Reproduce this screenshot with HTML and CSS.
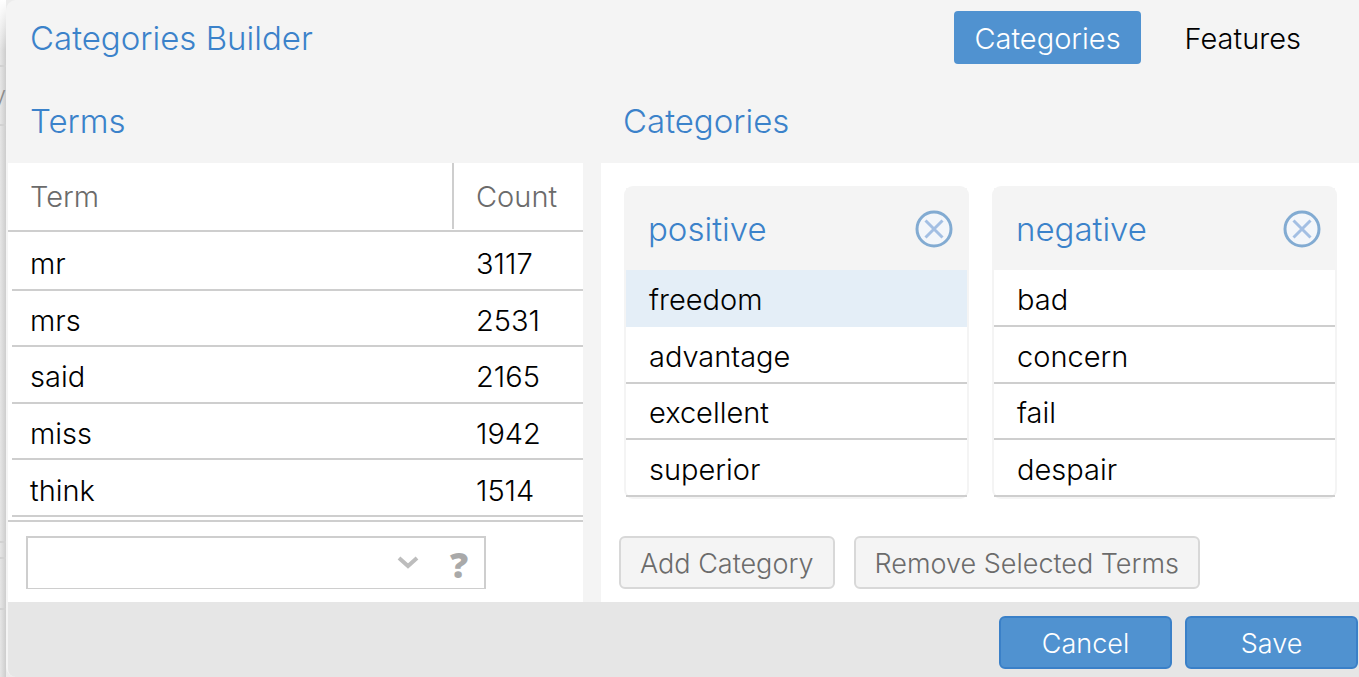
FILE: index.html
```html
<!DOCTYPE html>
<html lang="en">
<head>
<meta charset="utf-8">
<title>Categories Builder</title>
<link rel="stylesheet" href="styles.css">
</head>
<body>
<div class="backdrop" aria-hidden="true">
  <div class="backdrop-row backdrop-top"></div>
  <div class="backdrop-row backdrop-label">y</div>
  <div class="backdrop-row backdrop-body"></div>
  <div class="backdrop-row backdrop-gap"></div>
  <div class="backdrop-row backdrop-foot"></div>
</div>
<section class="dialog" role="dialog" aria-labelledby="dialog-title">
  <header class="dialog-header">
    <h1 class="title" id="dialog-title">Categories Builder</h1>
    <nav class="tabs">
      <button class="tab tab-active" type="button">Categories</button>
      <button class="tab" type="button">Features</button>
    </nav>
  </header>
  <main class="panels">
    <section class="panel">
      <h2 class="title panel-title">Terms</h2>
      <div class="panel-body">
        <table class="terms">
          <thead><tr><th>Term</th><th class="count-head">Count</th></tr></thead>
          <tbody>
            <tr><td>mr</td><td>3117</td></tr>
            <tr><td>mrs</td><td>2531</td></tr>
            <tr><td>said</td><td>2165</td></tr>
            <tr><td>miss</td><td>1942</td></tr>
            <tr><td>think</td><td>1514</td></tr>
          </tbody>
        </table>
        <div class="toolbar">
          <div class="search">
            <input class="search-input" type="text" aria-label="Search terms">
            <button class="icon-button" type="button" aria-label="Show options">
              <svg width="22" height="16" viewBox="0 0 22 16"><path d="M2 3l9 8 9-8" fill="none" stroke="#bdbdbd" stroke-width="4"/></svg>
            </button>
            <button class="icon-button help" type="button" aria-label="Help">?</button>
          </div>
        </div>
      </div>
    </section>
    <section class="panel">
      <h2 class="title panel-title">Categories</h2>
      <div class="panel-body">
        <div class="cards">
          <article class="card">
            <header class="card-header">
              <h3 class="title">positive</h3>
              <button class="icon-button" type="button" aria-label="Remove positive">
                <svg width="38" height="38" viewBox="0 0 38 38" fill="none"><circle cx="19" cy="19" r="17" fill="#f3f6fa" stroke="#82abd2" stroke-width="3"/><path d="M10.500 10.500l17 17M27.500 10.500l-17 17" stroke="#a3bfe3" stroke-width="3"/></svg>
              </button>
            </header>
            <ul class="words">
              <li class="word word-selected">freedom</li>
              <li class="word">advantage</li>
              <li class="word">excellent</li>
              <li class="word">superior</li>
            </ul>
          </article>
          <article class="card">
            <header class="card-header">
              <h3 class="title">negative</h3>
              <button class="icon-button" type="button" aria-label="Remove negative">
                <svg width="38" height="38" viewBox="0 0 38 38" fill="none"><circle cx="19" cy="19" r="17" fill="#f3f6fa" stroke="#82abd2" stroke-width="3"/><path d="M10.500 10.500l17 17M27.500 10.500l-17 17" stroke="#a3bfe3" stroke-width="3"/></svg>
              </button>
            </header>
            <ul class="words">
              <li class="word">bad</li>
              <li class="word">concern</li>
              <li class="word">fail</li>
              <li class="word">despair</li>
            </ul>
          </article>
        </div>
        <div class="toolbar">
          <button class="button" type="button">Add Category</button>
          <button class="button" type="button">Remove Selected Terms</button>
        </div>
      </div>
    </section>
  </main>
  <footer class="dialog-footer">
    <button class="button button-primary" type="button">Cancel</button>
    <button class="button button-primary" type="button">Save</button>
  </footer>
</section>
</body>
</html>
```

FILE: styles.css
```css
* { box-sizing: border-box; }

body {
  margin: 0;
  padding-left: 6px;
  background: #ececec;
  color: #000;
  font-family: Inter, "Liberation Sans", sans-serif;
  font-size: 29px;
  font-weight: 300;
  line-height: 36px;
}

button, input { font: inherit; color: inherit; }
button { cursor: pointer; }

/* Sliver of the page behind the dialog */
.backdrop {
  position: absolute;
  left: 0;
  top: 0;
  bottom: 0;
  width: 6px;
  overflow: hidden;
  display: flex;
  flex-direction: column;
  background: linear-gradient(90deg, #e6e6e6, #cdcdcd);
}
.backdrop-row { border-bottom: 2px solid #d2d2d2; flex: none; }
.backdrop-top { height: 67px; background: linear-gradient(#fff, transparent 50px); }
.backdrop-label {
  height: 59px;
  display: flex;
  align-items: center;
  justify-content: flex-end;
  color: #8c8c8c;
  font-size: 24px;
}
.backdrop-body { height: 417px; }
.backdrop-gap { height: 16px; }
.backdrop-foot { height: 51px; }

.dialog {
  position: relative;
  min-height: 100vh;
  display: flex;
  flex-direction: column;
  padding-left: 2px;
  background: #f4f4f4;
  border-radius: 10px 0 0 10px;
}

.dialog-header {
  display: flex;
  align-items: center;
  justify-content: space-between;
  padding: 11px 38px 11px 22px;
}

.title {
  margin: 0;
  color: #3b82ca;
  font-size: 33px;
  font-weight: 300;
  line-height: 40px;
}

.tabs { display: flex; gap: 24px; }
.tab {
  height: 53px;
  padding: 2px 20px 0;
  border: 0;
  border-radius: 4px;
  background: none;
}
.tab-active { background: #5092d0; color: #fff; }

.panels {
  flex: 1;
  display: grid;
  grid-template-columns: 575fr 758fr;
  gap: 18px;
}
.panel { display: flex; flex-direction: column; min-width: 0; }
.panel-title { padding: 26px 22px 22px; }
.panel-body {
  flex: 1;
  display: flex;
  flex-direction: column;
  background: #fff;
}

.terms {
  flex: 1;
  display: flex;
  flex-direction: column;
  border-bottom: 2px solid #cecece;
}
.terms thead { display: block; border-bottom: 2px solid #cecece; }
.terms tr {
  display: grid;
  grid-template-columns: 1fr 131px;
}
.terms th {
  height: 67px;
  padding: 16px 22px;
  color: #6b6b6b;
  font-weight: 300;
  text-align: left;
}
.terms .count-head { height: 66px; border-left: 2px solid #cecece; }
.terms tbody {
  flex: 1;
  display: grid;
  grid-auto-rows: 1fr;
  padding: 2px 0 3px 4px;
}
.terms tbody tr { align-items: center; border-bottom: 2px solid #cecece; }
.terms td { padding: 6px 24px 0; }
.terms td:first-child { padding-left: 18px; }

.toolbar {
  display: flex;
  gap: 19px;
  padding: 14px 18px 13px;
}
.search {
  width: 460px;
  height: 53px;
  display: flex;
  align-items: center;
  gap: 25px;
  padding-right: 10px;
  border: 2px solid #cecece;
  border-bottom-width: 1px;
}
.search-input {
  flex: 1;
  min-width: 0;
  height: 100%;
  padding: 0 16px;
  border: 0;
  outline: 0;
  background: none;
}
.icon-button {
  display: flex;
  padding: 0;
  border: 0;
  background: none;
}
.help {
  width: 30px;
  padding-top: 3px;
  justify-content: center;
  color: #a9a9a9;
  font-family: "Open Sans", sans-serif;
  font-size: 36px;
  font-weight: 800;
}

.cards {
  flex: 1;
  display: grid;
  grid-template-columns: 1fr 1fr;
  gap: 23px;
  padding: 23px 22px 23px 23px;
}
.card {
  display: flex;
  flex-direction: column;
  border: 2px solid #f4f4f4;
  border-radius: 9px;
}
.card-header {
  height: 82px;
  display: flex;
  align-items: center;
  justify-content: space-between;
  padding: 0 14px 0 22px;
  background: #f4f4f4;
}
.words {
  flex: 1;
  display: grid;
  grid-auto-rows: 1fr;
  margin: 0;
  padding: 0;
  list-style: none;
}
.word {
  display: flex;
  align-items: center;
  padding: 5px 23px 0;
  border-bottom: 2px solid #cecece;
}
.word-selected { background: #e4eef7; border-color: #e4eef7; }

.button {
  height: 53px;
  padding: 3px 19px 0;
  border: 2px solid #d8d8d8;
  border-radius: 6px;
  background: #f4f4f4;
  color: #6b6b6b;
  font-size: 27px;
  white-space: nowrap;
}
.button-primary {
  width: 173px;
  border-color: #3a80c8;
  background: #5092d0;
  color: #fff;
}
.dialog-footer {
  display: flex;
  justify-content: flex-end;
  gap: 13px;
  padding: 14px 1px 8px 0;
  background: #e6e6e6;
  border-bottom-left-radius: 8px;
}
```
